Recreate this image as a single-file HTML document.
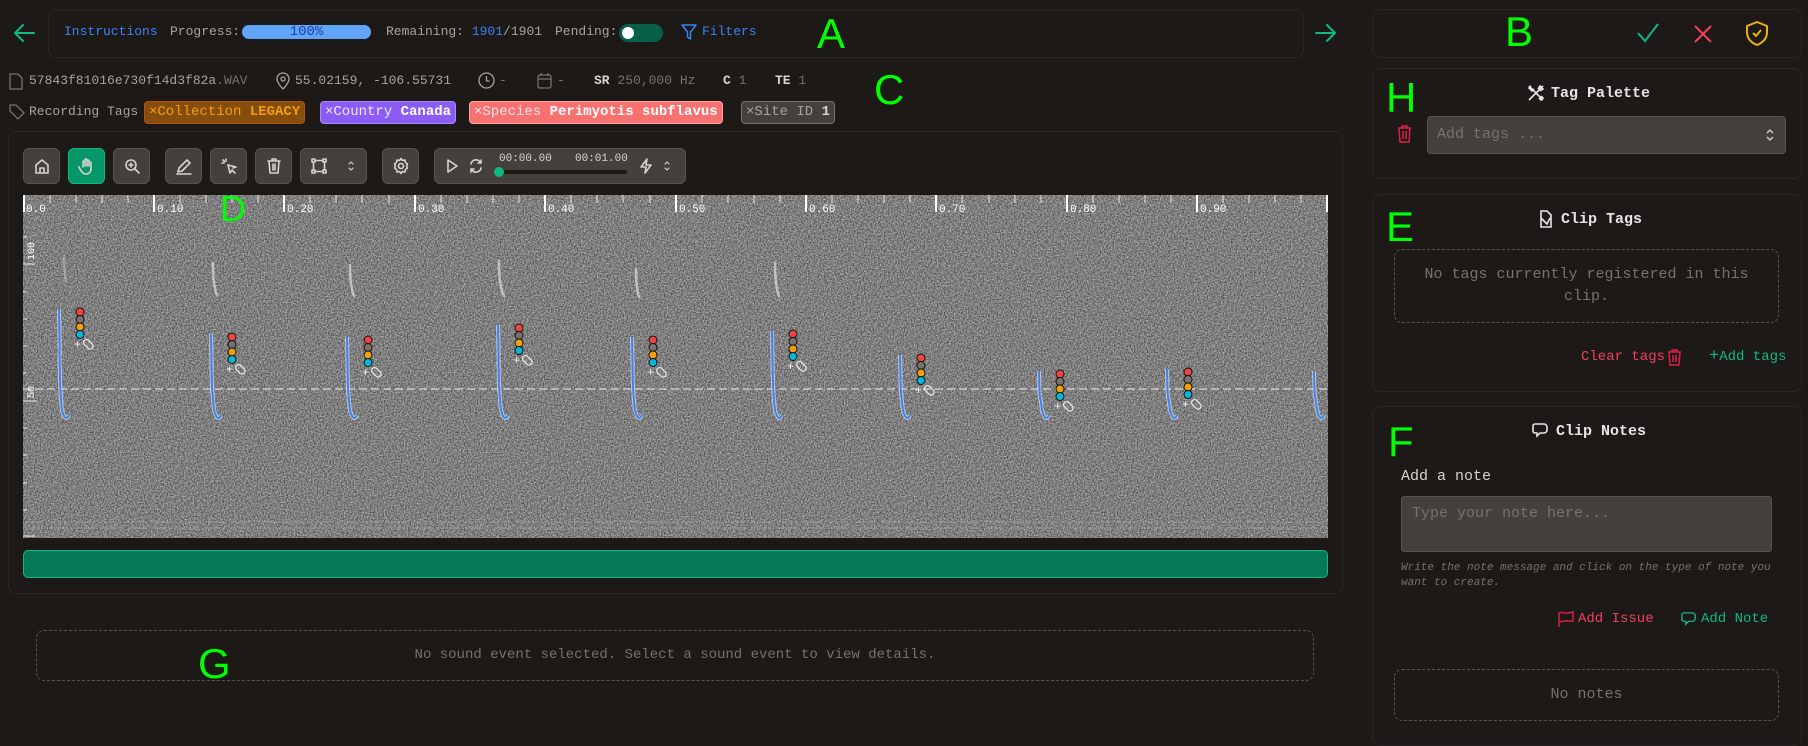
<!DOCTYPE html>
<html><head><meta charset="utf-8"><style>
*{box-sizing:border-box;margin:0;padding:0}
body{width:1808px;height:731px;background:#1c1917;font-family:"Liberation Mono",monospace;color:#a8a29e;position:relative;overflow:hidden;font-size:13px}
.a{position:absolute}
.panel{position:absolute;border:1px solid #292524;border-radius:8px;background:#1c1917}
.btn{position:absolute;top:148px;height:36px;background:#44403c;border:1px solid #57534e;border-radius:6px;display:flex;align-items:center;justify-content:center}
.btn svg{width:18px;height:18px;fill:none;stroke:#d6d3d1;stroke-width:1.6;stroke-linecap:round;stroke-linejoin:round}
.tag{position:absolute;top:101px;height:23px;border-radius:4px;border:1px solid;font-size:14px;line-height:21px;padding:0 4px;white-space:nowrap}
.tag b{font-weight:bold}
.ttl{position:absolute;font-weight:bold;color:#e7e5e4;font-size:15px;display:flex;align-items:center;gap:6px}
.ttl svg{width:18px;height:18px;fill:none;stroke:#e7e5e4;stroke-width:1.6}
.dash{position:absolute;border:1px dashed #57534e;border-radius:8px;color:#78716c;text-align:center}
</style></head><body>
<svg class="a" style="left:12px;top:22px" width="24" height="22" viewBox="0 0 24 22" fill="none" stroke="#10b981" stroke-width="2" stroke-linecap="round"><path d="M22 11H3M11 3L3 11l8 8"/></svg>
<div class="panel" style="left:48px;top:10px;width:1256px;height:48px"></div>
<div class="a" style="left:64px;top:24px;color:#3b82f6">Instructions</div>
<div class="a" style="left:170px;top:24px;color:#a8a29e">Progress:</div>
<div class="a" style="left:242px;top:25px;width:129px;height:14px;border-radius:7px;background:#60a5fa;color:#1e40af;text-align:center;line-height:14px;font-size:14px">100%</div>
<div class="a" style="left:386px;top:24px">Remaining: <span style="color:#3b82f6">1901</span>/1901</div>
<div class="a" style="left:555px;top:24px">Pending:</div>
<div class="a" style="left:619px;top:24px;width:44px;height:18px;border-radius:9px;background:#065f46"><div class="a" style="left:3px;top:3px;width:12px;height:12px;border-radius:6px;background:#fff"></div></div>
<svg class="a" style="left:681px;top:24px" width="16" height="17" viewBox="0 0 16 17" fill="none" stroke="#3b82f6" stroke-width="1.5" stroke-linejoin="round"><path d="M1 1h14L9.5 8v7L6.5 13V8z"/></svg>
<div class="a" style="left:702px;top:24px;color:#3b82f6">Filters</div>
<div class="a" style="left:817px;top:10px;color:#00ff00;font-family:'Liberation Sans',sans-serif;font-size:42px">A</div>
<svg class="a" style="left:1314px;top:22px" width="24" height="22" viewBox="0 0 24 22" fill="none" stroke="#10b981" stroke-width="2" stroke-linecap="round"><path d="M2 11h19M13 3l8 8-8 8"/></svg>
<svg class="a" style="left:9px;top:73px" width="14" height="17" viewBox="0 0 14 17" fill="none" stroke="#78716c" stroke-width="1.3"><path d="M1 1h8l4 4v11H1z"/></svg>
<div class="a" style="left:29px;top:73px">57843f81016e730f14d3f82a<span style="color:#78716c">.WAV</span></div>
<svg class="a" style="left:276px;top:72px" width="14" height="18" viewBox="0 0 14 18" fill="none" stroke="#a8a29e" stroke-width="1.3"><path d="M7 17s6-6 6-10A6 6 0 0 0 1 7c0 4 6 10 6 10z"/><circle cx="7" cy="7" r="2"/></svg>
<div class="a" style="left:295px;top:73px">55.02159, -106.55731</div>
<svg class="a" style="left:478px;top:72px" width="17" height="17" viewBox="0 0 17 17" fill="none" stroke="#a8a29e" stroke-width="1.3"><circle cx="8.5" cy="8.5" r="7.5"/><path d="M8.5 4v5h3"/></svg>
<div class="a" style="left:499px;top:73px;color:#78716c">-</div>
<svg class="a" style="left:537px;top:72px" width="15" height="17" viewBox="0 0 15 17" fill="none" stroke="#78716c" stroke-width="1.3"><rect x="1" y="3" width="13" height="13" rx="2"/><path d="M4 1v3M11 1v3M1 7h13"/></svg>
<div class="a" style="left:557px;top:73px;color:#78716c">-</div>
<div class="a" style="left:594px;top:73px"><b style="color:#d6d3d1">SR</b> <span style="color:#78716c">250,000 Hz</span></div>
<div class="a" style="left:723px;top:73px"><b style="color:#d6d3d1">C</b> <span style="color:#78716c">1</span></div>
<div class="a" style="left:775px;top:73px"><b style="color:#d6d3d1">TE</b> <span style="color:#78716c">1</span></div>
<div class="a" style="left:874px;top:66px;color:#00ff00;font-family:'Liberation Sans',sans-serif;font-size:42px">C</div>
<svg class="a" style="left:9px;top:104px" width="16" height="16" viewBox="0 0 16 16" fill="none" stroke="#78716c" stroke-width="1.3"><path d="M1 1h6l8 8-6 6-8-8z"/></svg>
<div class="a" style="left:29px;top:104px">Recording Tags</div>
<div class="tag" style="left:144px;background:#854d0e;border-color:#b45309;color:#f59e0b">×Collection <b>LEGACY</b></div>
<div class="tag" style="left:320px;background:#8b5cf6;border-color:#a78bfa;color:#ede9fe">×Country <b style="color:#fff">Canada</b></div>
<div class="tag" style="left:469px;background:#f87171;border-color:#fca5a5;color:#fee2e2">×Species <b style="color:#fff">Perimyotis subflavus</b></div>
<div class="tag" style="left:741px;background:#44403c;border-color:#78716c;color:#a8a29e">×Site ID <b style="color:#d6d3d1">1</b></div>
<div class="panel" style="left:8px;top:131px;width:1335px;height:463px"></div>
<div class="btn" style="left:23px;width:37px"><svg viewBox="0 0 18 18"><path d="M3 8l6-5 6 5v8H3zM7 16v-5h4v5"/></svg></div>
<div class="btn" style="left:68px;width:37px;background:#059669;border-color:#10b981"><svg viewBox="0 0 18 18"><path d="M5 10V5a1 1 0 0 1 2 0v4V3a1 1 0 0 1 2 0v6V4a1 1 0 0 1 2 0v5-3a1 1 0 0 1 2 0v5c0 4-2 6-5 6s-4-2-6-5l-1-2"/></svg></div>
<div class="btn" style="left:113px;width:37px"><svg viewBox="0 0 18 18"><circle cx="8" cy="8" r="5"/><path d="M12 12l4 4M8 6v4M6 8h4"/></svg></div>
<div class="btn" style="left:165px;width:37px"><svg viewBox="0 0 18 18"><path d="M3 15l1-4 8-8 3 3-8 8zM2 17h14"/></svg></div>
<div class="btn" style="left:210px;width:37px"><svg viewBox="0 0 18 18"><path d="M8 8l2 8 2-3 3 3M8 8l8 2-3 1M6 2v2M2 6h2M3 3l1.5 1.5"/></svg></div>
<div class="btn" style="left:255px;width:37px"><svg viewBox="0 0 18 18"><path d="M3 4h12M7 4V2h4v2M4 4l1 12h8l1-12M8 7v6M10 7v6"/></svg></div>
<div class="btn" style="left:300px;width:67px;justify-content:space-around"><svg viewBox="0 0 18 18"><rect x="2" y="2" width="3" height="3"/><rect x="13" y="2" width="3" height="3"/><rect x="2" y="13" width="3" height="3"/><rect x="13" y="13" width="3" height="3"/><path d="M5 3.5h8M5 14.5h8M3.5 5v8M14.5 5v8"/></svg><svg viewBox="0 0 18 18" style="width:12px"><path d="M6 6l3-3 3 3M6 12l3 3 3-3"/></svg></div>
<div class="btn" style="left:382px;width:37px"><svg viewBox="0 0 18 18"><circle cx="9" cy="9" r="2.5"/><path d="M9 1.5l1.5 2 2.5-.5.5 2.5 2 1.5-1 2 1 2-2 1.5-.5 2.5-2.5-.5-1.5 2-1.5-2-2.5.5-.5-2.5-2-1.5 1-2-1-2 2-1.5.5-2.5 2.5.5z"/></svg></div>
<div class="btn" style="left:434px;width:252px;justify-content:flex-start;padding-left:8px">
<svg viewBox="0 0 18 18"><path d="M5 3l9 6-9 6z"/></svg>
<svg viewBox="0 0 18 18" style="margin-left:6px"><path d="M4 7a5 5 0 0 1 9-2l1 1M14 11a5 5 0 0 1-9 2l-1-1M14 3v3h-3M4 15v-3h3"/></svg>
<div class="a" style="left:64px;top:4px;font-size:11px;color:#d6d3d1">00:00.00</div>
<div class="a" style="left:140px;top:4px;font-size:11px;color:#d6d3d1">00:01.00</div>
<div class="a" style="left:62px;top:21px;width:130px;height:4px;background:#1c1917;border-radius:2px"></div>
<div class="a" style="left:59px;top:18px;width:10px;height:10px;border-radius:5px;background:#10b981"></div>
<svg viewBox="0 0 18 18" style="position:absolute;left:202px"><path d="M10 2L4 10h5l-1 6 6-8H9z"/></svg>
<svg viewBox="0 0 18 18" style="position:absolute;left:226px;width:12px"><path d="M6 6l3-3 3 3M6 12l3 3 3-3"/></svg>
</div>
<svg class="a" style="left:23px;top:195px" width="1305" height="343" viewBox="0 0 1305 343">
<defs><filter id="n" x="0" y="0" width="100%" height="100%" color-interpolation-filters="sRGB"><feTurbulence type="fractalNoise" baseFrequency="0.7" numOctaves="2" seed="3"/><feColorMatrix type="matrix" values="1.5 0 0 0 -0.25  1.5 0 0 0 -0.25  1.5 0 0 0 -0.25  0 0 0 0 1"/></filter></defs>
<rect width="1305" height="343" filter="url(#n)"/>
<rect width="1305" height="343" fill="#7e7e7e" opacity="0.5"/>
<g stroke="#e5e5e5" stroke-width="1" fill="none">
<path d="M0 194H1305" stroke-dasharray="8 4" stroke-opacity=".55" stroke-width="2"/>
<path d="M0 327h1305M0 333h1305" stroke-opacity=".25" stroke-dasharray="20 6"/>
</g>
<g fill="#fff" font-size="11" font-family="Liberation Mono,monospace">
<g stroke="#fff" stroke-width="2"><path d="M1 0v17M131 0v17M261 0v17M392 0v17M522 0v17M653 0v17M783 0v17M913 0v17M1044 0v17M1174 0v17M1304 0v17"/></g>
<g stroke="#fff" stroke-width="1" stroke-opacity=".8"><path d="M27 0v8M53 0v8M79 0v8M105 0v8M157 0v8M183 0v8M209 0v8M235 0v8M287 0v8M313 0v8M339 0v8M366 0v8M418 0v8M444 0v8M470 0v8M496 0v8M548 0v8M574 0v8M600 0v8M627 0v8M679 0v8M705 0v8M731 0v8M757 0v8M809 0v8M835 0v8M861 0v8M887 0v8M939 0v8M966 0v8M992 0v8M1018 0v8M1070 0v8M1096 0v8M1122 0v8M1148 0v8M1200 0v8M1226 0v8M1252 0v8M1278 0v8"/>
<path d="M0 69h12M0 206h14M0 341h12M0 42h4M0 97h4M0 124h4M0 151h4M0 178h4M0 233h4M0 260h4M0 288h4M0 315h4"/></g>
<text x="3" y="17">0.0</text><text x="134" y="17">0.10</text><text x="264" y="17">0.20</text><text x="395" y="17">0.30</text><text x="525" y="17">0.40</text><text x="656" y="17">0.50</text><text x="786" y="17">0.60</text><text x="916" y="17">0.70</text><text x="1047" y="17">0.80</text><text x="1177" y="17">0.90</text>
<text transform="translate(11,65) rotate(-90)" font-size="10">100</text>
<text transform="translate(11,203) rotate(-90)" font-size="10">50</text>
</g>
<text x="197" y="26" fill="#00ff00" font-size="36" font-family="Liberation Sans,sans-serif">D</text>
<g id="calls"></g>
<g stroke="#f5f5f5" stroke-opacity=".55" stroke-width="2.5" fill="none" stroke-linecap="round">
<path d="M190 68c0 15 1 25 4 32"/><path d="M327 70c0 15 1 24 4 31"/><path d="M476 66c0 16 1 27 5 35"/><path d="M613 74c0 13 1 22 3 28"/><path d="M752 68c0 15 1 25 4 33"/><path d="M41 62c0 12 1 20 2 25" stroke-opacity=".3"/>
</g>
</svg>
<script>
var C=[[36,114],[188,139],[324,142],[475,130],[609,142],[749,136],[877,160],[1016,176],[1144,174],[1291,176]];
var s='';
C.forEach(function(c){var x=c[0],t=c[1];
var d='M'+x+' '+t+'C'+(x+1)+' '+(t+40)+' '+(x)+' 190 '+(x+3)+' 215 C'+(x+5)+' 224 '+(x+8)+' 225 '+(x+10)+' 220';
s+='<path d="'+d+'" stroke="#fff" stroke-width="4" stroke-opacity=".55" fill="none"/>';
s+='<path d="'+d+'" stroke="#3b82f6" stroke-width="2" fill="none"/>';
var dx=x+21,dy=t+3,cols=['#ef4444','#78716c','#f59e0b','#06b6d4'];
for(var i=0;i<4;i++)s+='<circle cx="'+dx+'" cy="'+(dy+i*7.5)+'" r="4" fill="'+cols[i]+'" stroke="#111" stroke-width="1"/>';
s+='<text x="'+(dx-6)+'" y="'+(dy+36)+'" fill="#eee" font-size="12">+</text><rect x="'+(dx+5)+'" y="'+(dy+27)+'" width="6" height="11" rx="3" transform="rotate(-45 '+(dx+8)+' '+(dy+32)+')" fill="none" stroke="#eee" stroke-width="1.2"/>';
});
document.getElementById('calls').innerHTML=s;
</script>
<div class="a" style="left:23px;top:550px;width:1305px;height:28px;background:#047857;border:1px solid #10b981;border-radius:5px"></div>
<div class="dash" style="left:36px;top:630px;width:1278px;height:51px;line-height:49px;font-size:14px">No sound event selected. Select a sound event to view details.</div>
<div class="a" style="left:198px;top:640px;color:#00ff00;font-family:'Liberation Sans',sans-serif;font-size:42px">G</div>
<div class="panel" style="left:1372px;top:9px;width:430px;height:49px"></div>
<div class="a" style="left:1505px;top:8px;color:#00ff00;font-family:'Liberation Sans',sans-serif;font-size:42px">B</div>
<svg class="a" style="left:1637px;top:23px" width="22" height="20" viewBox="0 0 22 20" fill="none" stroke="#10b981" stroke-width="2"><path d="M1 10l7 8L21 1"/></svg>
<svg class="a" style="left:1694px;top:25px" width="18" height="18" viewBox="0 0 18 18" fill="none" stroke="#f43f5e" stroke-width="2"><path d="M1 1l16 16M17 1L1 17"/></svg>
<svg class="a" style="left:1744px;top:20px" width="26" height="26" viewBox="0 0 26 26" fill="none" stroke="#eab308" stroke-width="2" stroke-linejoin="round"><path d="M13 2l10 4v6c0 7-5 11-10 13C8 23 3 19 3 12V6z"/><path d="M9 13l3 3 5-6"/></svg>
<div class="panel" style="left:1372px;top:68px;width:430px;height:111px"></div>
<div class="a" style="left:1386px;top:74px;color:#00ff00;font-family:'Liberation Sans',sans-serif;font-size:42px">H</div>
<div class="ttl" style="left:1527px;top:84px"><svg viewBox="0 0 18 18"><path d="M2 2l14 14M16 2L2 16M4 2l-2 2 3 3 2-2M14 12l2 2-2 2-2-2M11 5l2-3 3 3-3 2"/></svg>Tag Palette</div>
<svg class="a" style="left:1397px;top:125px" width="15" height="18" viewBox="0 0 15 18" fill="none" stroke="#e11d48" stroke-width="1.5"><path d="M1 3h13M5 3V1h5v2M2 3l1 14h9l1-14M6 6v8M9 6v8"/></svg>
<div class="a" style="left:1427px;top:116px;width:359px;height:38px;background:#44403c;border:1px solid #57534e;border-radius:4px;color:#78716c;font-size:15px;line-height:36px;padding-left:9px">Add tags ...</div>
<svg class="a" style="left:1765px;top:128px" width="10" height="14" viewBox="0 0 10 14" fill="none" stroke="#d6d3d1" stroke-width="1.3"><path d="M2 5l3-3 3 3M2 9l3 3 3-3"/></svg>
<div class="panel" style="left:1372px;top:194px;width:430px;height:198px"></div>
<div class="a" style="left:1386px;top:203px;color:#00ff00;font-family:'Liberation Sans',sans-serif;font-size:42px">E</div>
<div class="ttl" style="left:1537px;top:210px"><svg viewBox="0 0 18 18"><path d="M4 1h6l4 4v12H4zM4 8l6 6 3-6"/></svg>Clip Tags</div>
<div class="dash" style="left:1394px;top:249px;width:385px;height:74px;font-size:15px;line-height:22px;padding-top:14px">No tags currently registered in this<br>clip.</div>
<div class="a" style="left:1581px;top:349px;color:#f43f5e;font-size:14px">Clear tags</div>
<svg class="a" style="left:1667px;top:349px" width="15" height="17" viewBox="0 0 15 17" fill="none" stroke="#e11d48" stroke-width="1.5"><path d="M1 3h13M5 3V1h5v2M2 3l1 13h9l1-13M6 6v7M9 6v7"/></svg>
<div class="a" style="left:1709px;top:347px;color:#10b981;font-size:14px"><span style="font-size:17px">+</span>Add tags</div>
<div class="panel" style="left:1372px;top:406px;width:430px;height:340px"></div>
<div class="a" style="left:1388px;top:418px;color:#00ff00;font-family:'Liberation Sans',sans-serif;font-size:42px">F</div>
<div class="ttl" style="left:1532px;top:422px"><svg viewBox="0 0 18 18"><path d="M3 2h9a3 3 0 0 1 3 3v3a3 3 0 0 1-3 3H8l-3 3v-3H3a2 2 0 0 1-2-2V4a2 2 0 0 1 2-2z"/></svg>Clip Notes</div>
<div class="a" style="left:1401px;top:468px;color:#d6d3d1;font-size:15px">Add a note</div>
<div class="a" style="left:1401px;top:496px;width:371px;height:56px;background:#44403c;border:1px solid #57534e;border-radius:3px;color:#78716c;font-size:15px;padding:8px 10px">Type your note here...</div>
<div class="a" style="left:1401px;top:561px;width:380px;font-size:11px;font-style:italic;color:#78716c;line-height:15px">Write the note message and click on the type of note you want to create.</div>
<svg class="a" style="left:1558px;top:611px" width="16" height="17" viewBox="0 0 16 17" fill="none" stroke="#e11d48" stroke-width="1.4"><path d="M1 16V2c3-2 5 1 8 0l6-1v9c-3 1-5-1-8 0l-6 1"/></svg>
<div class="a" style="left:1578px;top:611px;color:#f43f5e;font-size:14px">Add Issue</div>
<svg class="a" style="left:1681px;top:611px" width="17" height="17" viewBox="0 0 18 18" fill="none" stroke="#10b981" stroke-width="1.4"><path d="M3 2h9a3 3 0 0 1 3 3v3a3 3 0 0 1-3 3H8l-3 3v-3H3a2 2 0 0 1-2-2V4a2 2 0 0 1 2-2z"/></svg>
<div class="a" style="left:1701px;top:611px;color:#10b981;font-size:14px">Add Note</div>
<div class="dash" style="left:1394px;top:669px;width:385px;height:52px;line-height:50px;font-size:15px">No notes</div>
</body></html>
